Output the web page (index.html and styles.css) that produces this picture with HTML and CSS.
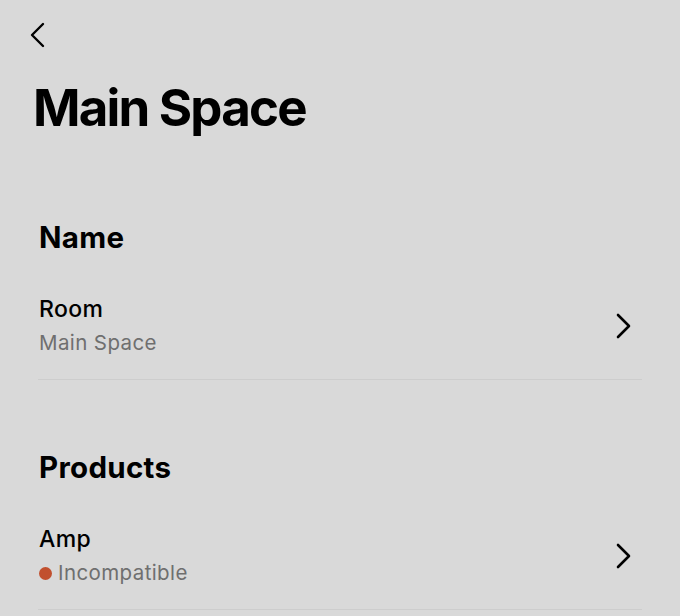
FILE: index.html
```html
<!DOCTYPE html>
<html>
<head>
<meta charset="utf-8">
<link rel="stylesheet" href="styles.css">
</head>
<body>
<div class="page">
  <header class="nav">
    <svg class="back" width="16" height="26" viewBox="0 0 16 26"><path d="M14 2 L3 13 L14 24" fill="none" stroke="#000" stroke-width="2.4" stroke-linecap="round" stroke-linejoin="round"/></svg>
  </header>
  <h1 class="title">Main Space</h1>
  <section class="section">
    <h2 class="section-title">Name</h2>
    <div class="row">
      <div class="row-text">
        <div class="row-label">Room</div>
        <div class="row-sub">Main Space</div>
      </div>
      <svg class="chev" width="16" height="26" viewBox="0 0 16 26"><path d="M2 2 L13 13 L2 24" fill="none" stroke="#000" stroke-width="2.6" stroke-linecap="round" stroke-linejoin="round"/></svg>
    </div>
  </section>
  <section class="section products">
    <h2 class="section-title">Products</h2>
    <div class="row">
      <div class="row-text">
        <div class="row-label">Amp</div>
        <div class="row-sub"><span class="dot"></span>Incompatible</div>
      </div>
      <svg class="chev" width="16" height="26" viewBox="0 0 16 26"><path d="M2 2 L13 13 L2 24" fill="none" stroke="#000" stroke-width="2.6" stroke-linecap="round" stroke-linejoin="round"/></svg>
    </div>
  </section>
</div>
</body>
</html>
```
FILE: styles.css
```css
html, body {
  margin: 0;
  padding: 0;
  background: #d9d9d9;
}
body {
  font-family: Inter, "Liberation Sans", sans-serif;
  color: #000;
  height: 616px;
  overflow: hidden;
}
.page {
  display: flex;
  flex-direction: column;
}
.nav {
  padding: 22px 0 0 29px;
  height: 26px;
}
.back {
  display: block;
}
.title {
  margin: 30px 0 0 33px;
  font-size: 51px;
  line-height: 60px;
  font-weight: 700;
  letter-spacing: -1.8px;
}
.section {
  margin: 81px 38px 0 38px;
}
.products {
  margin-top: 69px;
}
.section-title {
  margin: 0 0 0 1px;
  font-size: 29.5px;
  line-height: 36px;
  font-weight: 700;
  letter-spacing: 0.3px;
}
.row {
  display: flex;
  align-items: center;
  justify-content: space-between;
  margin-top: 40px;
  padding: 0 0 22px 1px;
  border-bottom: 1px solid #cdcdcd;
}
.row-label {
  font-size: 23px;
  line-height: 28px;
  font-weight: 500;
  letter-spacing: 0.4px;
}
.row-sub {
  margin-top: 6px;
  font-size: 20.5px;
  line-height: 28px;
  color: #6f6f6f;
  display: flex;
  align-items: center;
  letter-spacing: 0.4px;
}
.dot {
  width: 13px;
  height: 13px;
  border-radius: 50%;
  background: #c1502e;
  margin-right: 6px;
}
.chev {
  display: block;
  margin-right: 10px;
}
```
